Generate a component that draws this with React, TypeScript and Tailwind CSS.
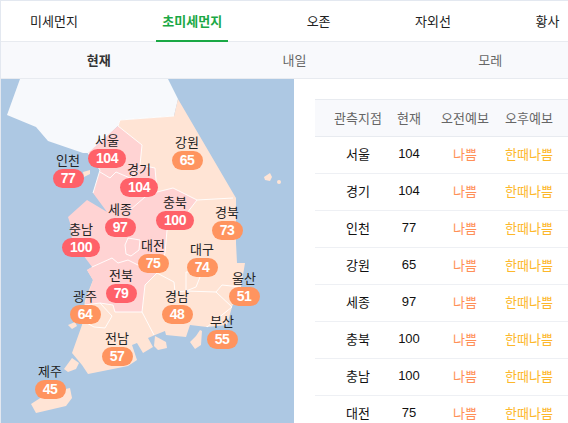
const F = { fontFamily: '"Noto Sans CJK KR", "Liberation Sans", sans-serif' };

const pins = [
  { n: '서울', v: 104, x: 107, y: 149, bad: true },
  { n: '강원', v: 65, x: 187, y: 151, bad: false },
  { n: '인천', v: 77, x: 68, y: 169, bad: true },
  { n: '경기', v: 104, x: 139, y: 178, bad: true },
  { n: '충북', v: 100, x: 175, y: 211, bad: true },
  { n: '세종', v: 97, x: 120, y: 218, bad: true },
  { n: '경북', v: 73, x: 227, y: 221, bad: false },
  { n: '충남', v: 100, x: 81, y: 238, bad: true },
  { n: '대전', v: 75, x: 153, y: 254, bad: false },
  { n: '대구', v: 74, x: 202, y: 258, bad: false },
  { n: '전북', v: 79, x: 121, y: 284, bad: true },
  { n: '울산', v: 51, x: 244, y: 287, bad: false },
  { n: '광주', v: 64, x: 85, y: 305, bad: false },
  { n: '경남', v: 48, x: 177, y: 305, bad: false },
  { n: '부산', v: 55, x: 222, y: 330, bad: false },
  { n: '전남', v: 57, x: 117, y: 347, bad: false },
  { n: '제주', v: 45, x: 50, y: 380, bad: false },
];

const rows: [string, number][] = [
  ['서울', 104], ['경기', 104], ['인천', 77], ['강원', 65],
  ['세종', 97], ['충북', 100], ['충남', 100], ['대전', 75],
];

function KoreaMap() {
  return (
    <svg viewBox="1 79 293 344" className="absolute inset-0 h-full w-full" strokeLinejoin="round">
      <path fill="#f7f9fc" d="M20 79 L7 115 L36 127 L48 141 L83 153 L90 153 L118 126 L120 120 L174 116 L178 99 L168 79 Z" />
      <path fill="#ffe4d5" d="M120 120 L174 116 L178 99 L233 193 L236 198 L236 243 L237 263 L245 263 L241 287 L232 307 L227 325 L207 327 L190 325 L186 337 L166 335 L165 331 L155 335 L148 338 L153 347 L143 353 L137 343 L132 345 L137 360 L128 366 L88 374 L82 365 L72 353 L82 325 L85 300 L93 280 L87 270 L92 267 L112 258 L140 200 L118 126 Z" />
      <path fill="#ffd3d3" d="M118 126 L142 145 L140 165 L155 168 L157 192 L173 188 L197 200 L187 213 L167 230 L165 253 L157 273 L145 285 L142 312 L115 312 L113 305 L100 303 L85 305 L93 280 L87 270 L92 267 L72 240 L70 223 L68 217 L87 200 L107 212 L93 193 L100 170 L88 153 Z" />
      <g fill="none" stroke="#ffffff" strokeOpacity="0.9" strokeWidth="1">
        <path d="M118 126 L120 120 L174 116 M118 126 L142 145 L140 165 L155 168 L157 192 L173 188 L197 200 L233 198" />
        <path d="M197 200 L187 213 L167 230 L165 253 L157 273 L145 285 L142 312 L115 312 L113 305 L100 303 L85 305" />
        <path d="M92 267 L112 258 L118 263 L128 260 L138 265 L157 273 L174 282 L175 292 L186 291 L216 292 L232 307 L207 327 L207 326" />
        <path d="M142 312 L154 335 M186 291 L186 272 L202 272 L196 287 L186 291 M216 292 L222 285 L241 287" />
        <path d="M157 192 L145 197 L130 210 M100 172 L110 178 L116 172 L130 178 L140 168" />
        <path d="M128 238 L140 240 L139 250 L131 256 L126 254 L125 245 Z" />
        <path d="M100 303 L112 316 L105 328 L94 327 L85 322" />
        <path d="M88 153 L100 170 L93 193" />
      </g>
      <path fill="#ffe4d5" d="M155 336 L166 342 L167 348 L158 350 L154 346 Z" />
      <path fill="#ffe4d5" d="M200 330 L202 331 L201 345 L195 349 L190 342 L196 336 Z" />
      <path fill="#ffe4d5" d="M72 358 L79 363 L76 369 L68 372 L64 369 Z" />
      <path fill="#ffe4d5" d="M70 388 L72 398 L66 406 L36 413 L31 404 L48 393 Z" />
      <path fill="#ffe4d5" d="M68 325 L75 322 L77 326 L72 329 Z" />
      <path fill="#ffe4d5" d="M83 172 L90 170 L90 174 L84 177 Z" />
      <path fill="#ffe4d5" d="M264 177 L270 173 L272 177 L270 181 L265 180 Z" />
      <circle cx="279" cy="182" r="2" fill="#ffe4d5" />
    </svg>
  );
}

function Pin({ n, v, x, y, bad }: { n: string; v: number; x: number; y: number; bad: boolean }) {
  return (
    <div
      className="absolute flex w-[40px] -translate-x-1/2 flex-col items-center"
      style={{ left: x - 1, top: y - 79 - 19 }}
    >
      <span className="text-[13px] leading-[19px] whitespace-nowrap text-[#222222]">{n}</span>
      <span
        className={`flex h-[19px] items-center justify-center rounded-[10px] text-[14px] font-bold tracking-[-0.5px] text-white ${v >= 100 ? 'w-[38px]' : 'w-[31px]'} ${bad ? 'bg-[#ff6169]' : 'bg-[#ff945f]'}`}
        style={{ fontFamily: '"Liberation Sans", sans-serif' }}
      >
        {v}
      </span>
    </div>
  );
}

const cols = 'grid grid-cols-[68px_52px_60px_73px] items-center text-center';

export default function App() {
  return (
    <div className="h-[423px] w-[568px] overflow-hidden border-t border-l border-[#e3e8f0] bg-white" style={F}>
      <nav className="flex h-[41px] gap-[72.5px] border-b border-[#e8ebf0] pl-[23px] text-[13px] whitespace-nowrap text-[#222222]">
        <a className="flex h-[41px] shrink-0 items-center px-[6px] pb-[2px]">미세먼지</a>
        <a className="flex h-[41px] shrink-0 items-center border-b-2 border-[#1aa845] px-[6px] font-bold text-[#1aa845]">초미세먼지</a>
        <a className="flex h-[41px] shrink-0 items-center px-[6px] pb-[2px]">오존</a>
        <a className="flex h-[41px] shrink-0 items-center px-[6px] pb-[2px]">자외선</a>
        <a className="flex h-[41px] shrink-0 items-center px-[6px] pb-[2px]">황사</a>
      </nav>
      <div className="grid h-[37px] w-[587px] grid-cols-3 border-b border-[#e8ebf0] bg-[#f8f9fc] text-[13px] text-[#666666]">
        <a className="flex items-center justify-center font-bold text-[#333333]">현재</a>
        <a className="flex items-center justify-center">내일</a>
        <a className="flex items-center justify-center">모레</a>
      </div>
      <div className="flex">
        <div className="relative h-[344px] w-[293px] shrink-0 bg-[#adc8e3]">
          <KoreaMap />
          {pins.map((p) => <Pin key={p.n} {...p} />)}
        </div>
        <div className="ml-[21px] mt-[20px] min-w-0 flex-1 text-[13px]">
          <div className={`${cols} h-[38px] border-y border-[#e8ebf0] bg-[#f8f9fc] text-[#666666]`}>
            <span className="pl-[18px] whitespace-nowrap">관측지점</span>
            <span>현재</span>
            <span className="whitespace-nowrap">오전예보</span>
            <span className="pr-[5px] whitespace-nowrap">오후예보</span>
          </div>
          {rows.map(([n, v]) => (
            <div key={n} className={`${cols} h-[37px] border-b border-[#eef0f4] pb-[2px] text-[#111111]`}>
              <span className="pl-[18px]">{n}</span>
              <span style={{ fontFamily: '"Liberation Sans", sans-serif' }}>{v}</span>
              <span className="text-[#ff8f57]">나쁨</span>
              <span className="pr-[5px] whitespace-nowrap text-[#fdb72a]">한때나쁨</span>
            </div>
          ))}
        </div>
      </div>
    </div>
  );
}
